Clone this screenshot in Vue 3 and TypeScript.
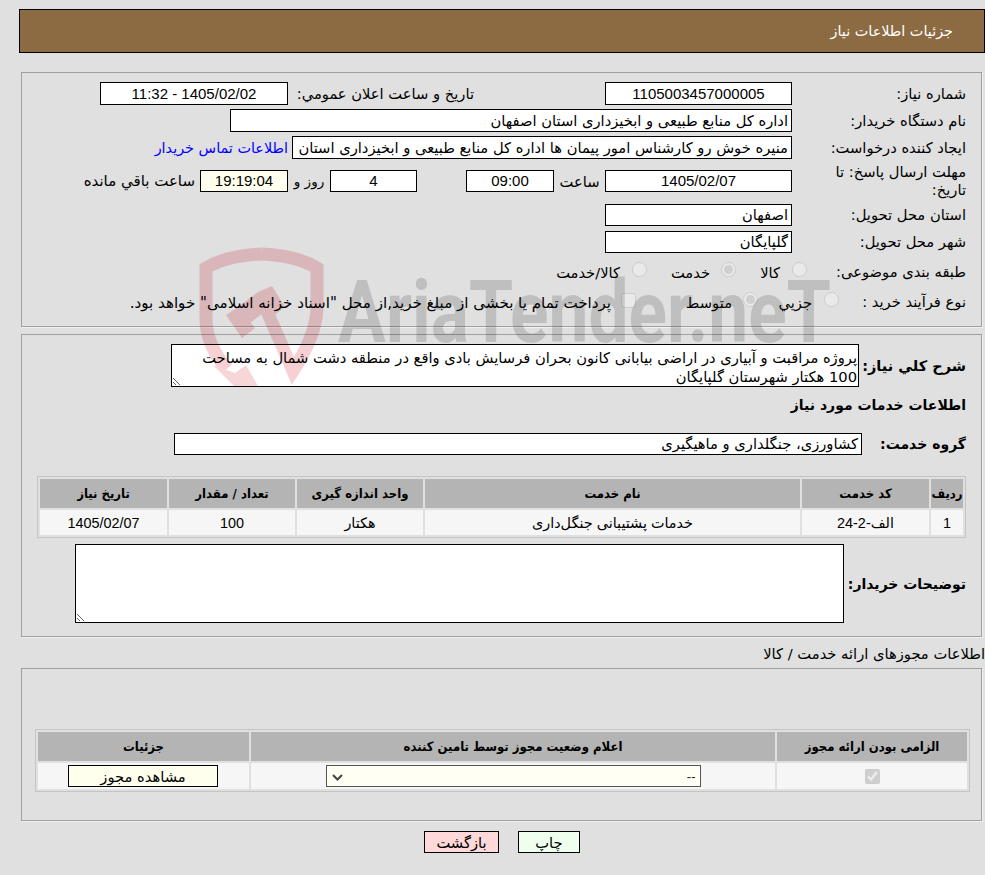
<script setup lang="ts">
const services = [
  { idx: '1', code: 'الف-2-24', name: 'خدمات پشتیبانی جنگل‌داری', unit: 'هکتار', qty: '100', date: '1405/02/07' },
]
const description = 'پروژه مراقبت و آبیاری در اراضی بیابانی کانون بحران فرسایش بادی واقع در منطقه دشت شمال به مساحت 100 هکتار شهرستان گلپایگان'
</script>

<template>
  <div class="page" dir="rtl">
    <header class="title-bar">جزئیات اطلاعات نیاز</header>

    <section class="panel panel-main">
      <div class="row row-a">
        <div class="label">شماره نیاز:</div>
        <div class="box w187 center num">1105003457000005</div>
        <div class="label publish">تاریخ و ساعت اعلان عمومي:</div>
        <div class="box w188 center num">1405/02/02 - 11:32</div>
      </div>
      <div class="row row-a">
        <div class="label">نام دستگاه خریدار:</div>
        <div class="box w562">اداره کل منابع طبیعی و ابخیزداری استان اصفهان</div>
      </div>
      <div class="row row-a">
        <div class="label">ایجاد کننده درخواست:</div>
        <div class="box w500 clip">منیره خوش رو کارشناس امور پیمان ها اداره کل منابع طبیعی و ابخیزداری استان</div>
        <a class="contact" href="#">اطلاعات تماس خریدار</a>
      </div>
      <div class="row row-deadline">
        <div class="label two-line">مهلت ارسال پاسخ: تا تاریخ:</div>
        <div class="box w187 center num short">1405/02/07</div>
        <div class="unit unit-time">ساعت</div>
        <div class="box w88 center num short">09:00</div>
        <div class="spacer49"></div>
        <div class="box w87 center num short">4</div>
        <div class="unit unit-day">روز و</div>
        <div class="box w88 center num short ivory">19:19:04</div>
        <div class="unit unit-left">ساعت باقي مانده</div>
      </div>
      <div class="row row-b">
        <div class="label">استان محل تحویل:</div>
        <div class="box w187 short">اصفهان</div>
      </div>
      <div class="row row-c">
        <div class="label">شهر محل تحویل:</div>
        <div class="box w187 short">گلپایگان</div>
      </div>
      <div class="row row-category">
        <div class="label">طبقه بندی موضوعی:</div>
        <div class="choices">
          <label class="choice c-kala"><input type="radio" disabled name="cat" /><span>کالا</span></label>
          <label class="choice c-khedmat"><input type="radio" disabled checked name="cat" /><span>خدمت</span></label>
          <label class="choice c-both"><input type="radio" disabled name="cat" /><span>کالا/خدمت</span></label>
        </div>
      </div>
      <div class="row row-process">
        <div class="label">نوع فرآیند خرید :</div>
        <div class="choices">
          <label class="choice p-small"><input type="radio" disabled name="proc" /><span>جزیي</span></label>
          <label class="choice p-medium"><input type="radio" disabled checked name="proc" /><span>متوسط</span></label>
          <label class="choice p-pay"><input type="checkbox" disabled /><span>پرداخت تمام یا بخشی از مبلغ خرید,از محل "اسناد خزانه اسلامی" خواهد بود.</span></label>
        </div>
      </div>
    </section>

    <section class="panel panel-detail">
      <div class="row row-desc">
        <div class="label-bold l-desc">شرح کلي نیاز:</div>
        <textarea class="area area-desc" dir="rtl" readonly :value="description"></textarea>
      </div>
      <div class="heading">اطلاعات خدمات مورد نیاز</div>
      <div class="row row-group">
        <div class="label-bold l-group">گروه خدمت:</div>
        <div class="box w688 short">کشاورزی، جنگلداری و ماهیگیری</div>
      </div>
      <table class="grid grid-services">
        <colgroup>
          <col style="width: 32px" /><col style="width: 127px" /><col style="width: 375px" />
          <col style="width: 126px" /><col style="width: 126px" /><col style="width: 127px" />
        </colgroup>
        <thead>
          <tr><th>ردیف</th><th>کد خدمت</th><th>نام خدمت</th><th>واحد اندازه گیری</th><th>تعداد / مقدار</th><th>تاریخ نیاز</th></tr>
        </thead>
        <tbody>
          <tr v-for="s in services" :key="s.idx">
            <td>{{ s.idx }}</td><td>{{ s.code }}</td><td>{{ s.name }}</td><td>{{ s.unit }}</td><td>{{ s.qty }}</td><td>{{ s.date }}</td>
          </tr>
        </tbody>
      </table>
      <div class="row row-notes">
        <div class="label-bold l-notes">توضیحات خریدار:</div>
        <textarea class="area area-notes" dir="rtl" readonly></textarea>
      </div>
    </section>

    <div class="section-title">اطلاعات مجوزهای ارائه خدمت / کالا</div>

    <section class="panel panel-license">
      <table class="grid grid-license">
        <colgroup>
          <col style="width: 190px" /><col style="width: 524px" /><col style="width: 211px" />
        </colgroup>
        <thead>
          <tr><th>الزامی بودن ارائه مجوز</th><th>اعلام وضعیت مجوز توسط تامین کننده</th><th>جزئیات</th></tr>
        </thead>
        <tbody>
          <tr>
            <td><input class="must" type="checkbox" checked disabled /></td>
            <td>
              <select class="status" dir="rtl"><option>--</option></select>
            </td>
            <td><button class="view" type="button">مشاهده مجوز</button></td>
          </tr>
        </tbody>
      </table>
    </section>

    <div class="actions">
      <button class="btn print" type="button">چاپ</button>
      <button class="btn back" type="button">بازگشت</button>
    </div>

    <div class="watermark" aria-hidden="true">
      <svg class="shield" width="130" height="139" viewBox="0 0 130 139">
        <path d="M65 7 C43 8 22 13 9 21 L9 75 C10 92 18 108 30 122" fill="none" stroke="#f7d0d3" stroke-width="13" />
        <path d="M65 7 C87 8 107 13 120 21 L120 62 C119 84 109 104 96 124 L69 62" fill="none" stroke="#f7d0d3" stroke-width="13" />
        <path d="M16 118 L38 126 L49 118 L61 139 L37 139 Z" fill="#f7d6d7" />
        <path d="M61 45 L75 39 L88 60 L75 70 Z M29 68 L41 60 L58 81 L45 91 Z M41 60 L61 45 L71 62 L53 76 Z" fill="#f7d0d3" />
      </svg>
      <span class="brand">AriaTender.neT</span>
    </div>
  </div>
</template>

<style>
html, body { margin: 0; background: #e0e0e0; }
</style>

<style scoped>
.page {
  position: relative;
  isolation: isolate;
  width: 985px;
  height: 875px;
  overflow: hidden;
  background: #e0e0e0;
  color: #000;
  font-family: "DejaVu Sans", sans-serif;
  font-size: 14.7px;
  padding-top: 9px;
  box-sizing: border-box;
}
.watermark {
  position: absolute;
  left: 0;
  top: 0;
  width: 985px;
  height: 875px;
  pointer-events: none;
  mix-blend-mode: multiply;
}
.shield { position: absolute; left: 197px; top: 247px; }
.brand {
  position: absolute;
  left: 338px;
  top: 262px;
  direction: ltr;
  font-family: Roboto, sans-serif;
  font-weight: 700;
  font-size: 88px;
  line-height: 100px;
  color: #dadada;
  white-space: nowrap;
  transform: scaleX(0.81);
  transform-origin: left top;
}
.title-bar {
  position: relative;
  margin-left: 19px;
  height: 44px;
  box-sizing: border-box;
  border: 1px solid #000;
  background: #8c6b42;
  color: #fff;
  font-size: 14.4px;
  line-height: 42px;
  padding-right: 31px;
}
.panel {
  position: relative;
  margin-left: 21px;
  margin-right: 3px;
  box-sizing: border-box;
  border: 1px solid #a0a0a0;
  box-shadow: 1px 1px 0 #f0f0f0;
  padding-right: 15px;
}
.panel-main { margin-top: 19px; height: 255px; padding-top: 9px; }
.panel-detail { margin-top: 7px; height: 303px; padding-top: 9px; }
.panel-license { margin-top: 5px; height: 153px; padding: 60px 11px 0 0; }
.row { display: flex; align-items: center; }
.row-a { height: 23px; margin-bottom: 4px; }
.row-deadline { height: 36px; margin-bottom: 4px; }
.row-b { height: 23px; margin-bottom: 4px; }
.row-c { height: 23px; margin-bottom: 7px; }
.row-category { height: 24px; margin-bottom: 6px; }
.row-process { height: 24px; }
.label { width: 174px; flex: none; box-sizing: border-box; line-height: 18px; white-space: nowrap; }
.two-line { padding-left: 28px; line-height: 18px; white-space: normal; }
.publish { width: 181px; margin-right: 131px; margin-left: 5px; }
.box {
  flex: none;
  box-sizing: border-box;
  height: 23px;
  border: 1px solid #000;
  background: #fff;
  line-height: 21px;
  padding: 0 3px;
  white-space: nowrap;
  overflow: hidden;
}
.short { height: 22px; line-height: 20px; }
.center { text-align: center; }
.num { font-family: "Liberation Sans", sans-serif; font-size: 15px; }
.ivory { background: #ffffee; }
.w187 { width: 187px; }
.w188 { width: 188px; }
.w562 { width: 562px; }
.w500 { width: 500px; }
.w88 { width: 88px; }
.w87 { width: 87px; }
.w688 { width: 688px; }
.contact { color: #0000ff; text-decoration: none; margin-right: 4px; white-space: nowrap; font-size: 14.4px; }
.unit { flex: none; white-space: nowrap; }
.unit-time { width: 51px; text-align: center; }
.spacer49 { width: 49px; flex: none; }
.unit-day { width: 42px; text-align: center; font-size: 13.6px; }
.unit-left { margin-right: 5px; font-size: 15px; }
.choices { position: relative; flex: 1; height: 24px; }
.choice { position: absolute; top: 1px; display: flex; align-items: center; white-space: nowrap; }
.choice input { width: 15px; height: 15px; margin: 0; opacity: 0.75; }
.choice span { position: relative; top: 3px; }
.c-kala { right: -15px; }
.c-kala span { margin-right: 12px; }
.c-khedmat { right: 56px; }
.c-khedmat span { margin-right: 11px; }
.c-both { right: 145px; }
.c-both span { margin-right: 12px; }
.p-small { right: -47px; }
.p-small span { margin-right: 12px; }
.p-medium { right: 34px; }
.p-medium span { margin-right: 11px; }
.p-pay { right: 156px; }
.p-pay span { margin-right: 10px; font-size: 15.1px; }
.label-bold, .heading { font-weight: 700; font-size: 14px; white-space: nowrap; }
.label-bold.l-desc { font-size: 14.5px; }
.row-desc { height: 43px; }
.l-desc { width: 107px; flex: none; }
.heading { margin-top: 8px; height: 20px; line-height: 20px; }
.row-group { margin-top: 18px; height: 22px; }
.l-group { width: 104px; flex: none; }
.area {
  flex: none;
  box-sizing: border-box;
  border: 1px solid #000;
  background: #fff;
  font: inherit;
  line-height: 19px;
  margin: 0;
  padding: 3px 1px;
  outline: none;
  resize: both;
}
.area-desc { width: 688px; height: 43px; }
.area-notes { width: 769px; height: 79px; }
.row-notes { margin-top: 6px; height: 79px; }
.l-notes { width: 122px; flex: none; }
.grid {
  border: 1px solid #c4c4c4;
  border-spacing: 2px;
  table-layout: fixed;
  border-collapse: separate;
  text-align: center;
}
.grid-services { width: 928px; margin-top: 21px; }
.grid-license { width: 935px; }
.grid th {
  background: #b4b4b4;
  height: 29px;
  padding: 0;
  font-size: 13px;
  font-stretch: condensed;
  font-weight: 700;
}
.grid td {
  background: #f6f6f6;
  height: 25px;
  padding: 0;
  font-family: "Liberation Sans", "DejaVu Sans", sans-serif;
  font-size: 14.4px;
}
.grid-license td { height: 26px; }
.must { width: 15px; height: 15px; margin: 0; vertical-align: middle; }
.status {
  display: block;
  margin: 0 auto;
  width: 375px;
  height: 22px;
  box-sizing: border-box;
  border: 1px solid #555;
  background-color: #fffff3;
  background-image: url("data:image/svg+xml,%3Csvg xmlns='http://www.w3.org/2000/svg' width='11' height='7'%3E%3Cpath d='M1 1l4.5 4.5L10 1' fill='none' stroke='%23444' stroke-width='2'/%3E%3C/svg%3E");
  background-repeat: no-repeat;
  background-position: 5px 8px;
  appearance: none;
  font: inherit;
  font-size: 13px;
  padding: 0 4px 0 0;
  color: #222;
}
.view {
  display: block;
  margin: 0 31px 0 30px;
  width: 150px;
  height: 22px;
  box-sizing: border-box;
  border: 1px solid #000;
  background: #ffffee;
  font-family: "DejaVu Sans", sans-serif;
  font-size: 14.7px;
  padding: 0;
}
.section-title { margin-top: 8px; height: 18px; line-height: 18px; position: relative; white-space: nowrap; }
.actions {
  position: relative;
  display: flex;
  justify-content: center;
  gap: 19px;
  margin-top: 10px;
  margin-left: 19px;
}
.btn {
  height: 22px;
  box-sizing: border-box;
  border: 1px solid #000;
  font: inherit;
  padding: 0;
}
.print { width: 62px; background: #eeffee; }
.back { width: 75px; background: #ffd9d9; }
</style>
